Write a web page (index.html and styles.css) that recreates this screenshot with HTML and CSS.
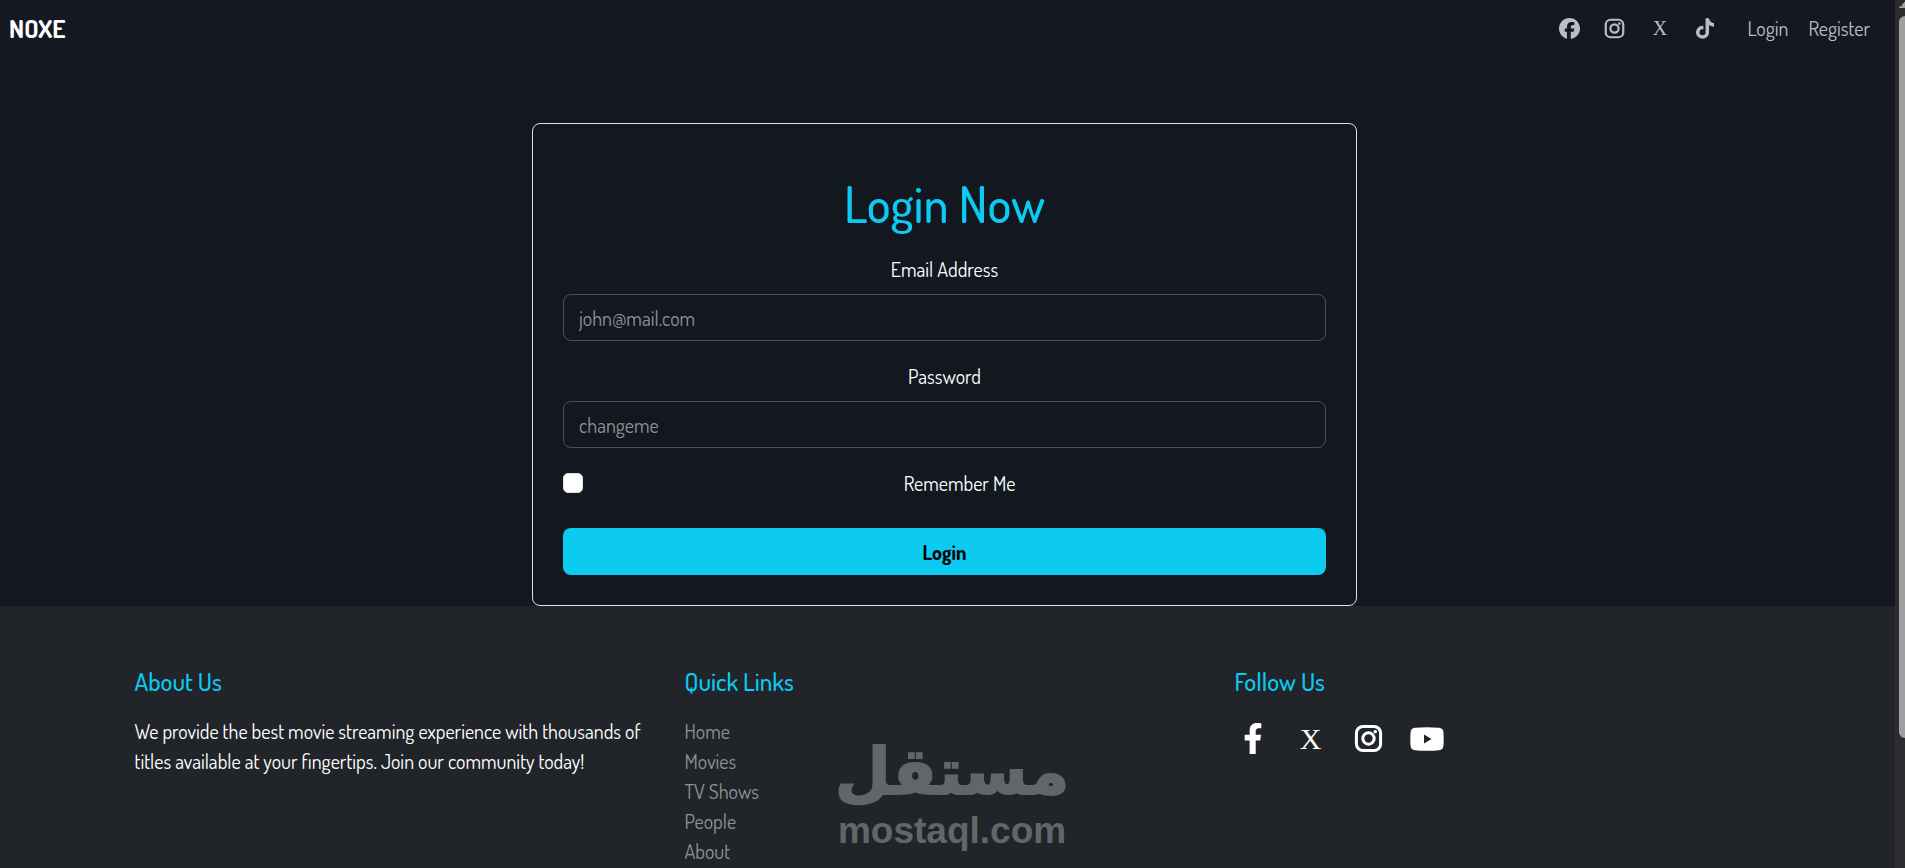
FILE: index.html
```html
<!DOCTYPE html>
<html lang="en">
<head>
  <meta charset="UTF-8">
  <meta name="viewport" content="width=device-width, initial-scale=1.0">
  <title>Noxe</title>
  <link rel="stylesheet" href="styles.css">
</head>
<body>
  <div class="window">
    <div class="page">
      <nav class="navbar">
        <a class="brand" href="#">NOXE</a>
        <ul class="nav-social">
          <li><a href="#" aria-label="Facebook">
            <svg width="21" height="21" viewBox="0 0 512 512"><path d="M512 256C512 114.600 397.400 0 256 0S0 114.600 0 256c0 120 82.700 220.800 194.200 248.500V334.200h-52.800V256h52.800v-33.700c0-87.100 39.400-127.500 125-127.500 16.200 0 44.200 3.200 55.700 6.400v70.800c-6-.6-16.500-1-29.600-1-42 0-58.200 15.900-58.200 57.200V256h83.600l-14.400 78.200H287v175.900C413.800 494.800 512 386.900 512 256z"/></svg>
          </a></li>
          <li><a href="#" aria-label="Instagram">
            <svg width="21" height="21" viewBox="0 0 24 24"><rect class="line" x="2" y="2" width="20" height="20" rx="5.500"/><circle class="line" cx="12" cy="12" r="4.700"/><circle cx="17.600" cy="6.400" r="1.500"/></svg>
          </a></li>
          <li><a class="x-mark" href="#">X</a></li>
          <li><a href="#" aria-label="TikTok">
            <svg width="18" height="21" viewBox="0 0 448 512"><path d="M448 209.900a210.100 210.100 0 0 1-122.800-39.300v178.800A162.600 162.600 0 1 1 185 188.300v89.900a74.600 74.600 0 1 0 52.200 71.200V0h88a121.200 121.200 0 0 0 1.900 22.200 122.200 122.200 0 0 0 53.900 80.200 121.400 121.400 0 0 0 67 20.100z"/></svg>
          </a></li>
        </ul>
        <ul class="nav-links">
          <li><a href="#">Login</a></li>
          <li><a href="#">Register</a></li>
        </ul>
      </nav>

      <main class="main">
        <form class="card">
          <h1>Login Now</h1>
          <label for="email">Email Address</label>
          <input class="field" type="email" id="email" placeholder="john@mail.com">
          <label for="password">Password</label>
          <input class="field" type="password" id="password" placeholder="changeme">
          <div class="remember">
            <input type="checkbox" id="remember">
            <label for="remember">Remember Me</label>
          </div>
          <button class="btn" type="button">Login</button>
        </form>
      </main>

      <footer class="footer">
        <div class="columns">
          <section>
            <h2>About Us</h2>
            <p>We provide the best movie streaming experience with thousands of titles available at your fingertips. Join our community today!</p>
          </section>
          <section>
            <h2>Quick Links</h2>
            <ul class="quick-links">
              <li><a href="#">Home</a></li>
              <li><a href="#">Movies</a></li>
              <li><a href="#">TV Shows</a></li>
              <li><a href="#">People</a></li>
              <li><a href="#">About</a></li>
            </ul>
          </section>
          <section>
            <h2>Follow Us</h2>
            <ul class="follow">
              <li><a href="#" aria-label="Facebook">
                <svg width="20" height="31" viewBox="0 0 320 512"><path d="M279.100 288l14.300-92.700h-89v-60.100c0-25.300 12.400-50.100 52.300-50.100h40.400V6.300S260.400 0 225.400 0C152.200 0 104.300 44.400 104.300 124.700v70.600H23V288h81.300v224h100.100V288z"/></svg>
              </a></li>
              <li><a class="x-mark" href="#">X</a></li>
              <li><a href="#" aria-label="Instagram">
                <svg width="29" height="29" viewBox="0 0 24 24"><rect class="line" x="2" y="2" width="20" height="20" rx="5.500"/><circle class="line" cx="12" cy="12" r="4.700"/><circle cx="17.600" cy="6.400" r="1.500"/></svg>
              </a></li>
              <li><a href="#" aria-label="YouTube">
                <svg width="34" height="24" viewBox="0 0 34 24"><path fill-rule="evenodd" d="M5 .8Q17-.4 29 .8Q33 1.200 33.400 5Q34 12 33.400 19Q33 22.800 29 23.200Q17 24.400 5 23.200Q1 22.800.6 19Q0 12 .6 5Q1 1.200 5 .8ZM14 7.600V16.400L21.600 12Z"/></svg>
              </a></li>
            </ul>
          </section>
        </div>
      </footer>
    </div>

    <div class="scrollbar">
      <span class="scroll-up"></span>
      <span class="scroll-thumb"></span>
    </div>

    <div class="watermark">
      <span class="watermark-ar" lang="ar">مستقل</span>
      <span class="watermark-en">mostaql.com</span>
    </div>
  </div>
</body>
</html>
```
FILE: styles.css
```css
* {
  margin: 0;
  padding: 0;
  box-sizing: border-box;
}

body {
  background-color: #131720;
  color: #fff;
  font-family: Dosis, "Liberation Sans Narrow", "Open Sans", sans-serif;
  font-size: 20px;
  line-height: 30px;
}

a {
  color: inherit;
  text-decoration: none;
}

ul {
  list-style: none;
}

svg {
  display: block;
  fill: currentColor;
}

svg .line {
  fill: none;
  stroke: currentColor;
  stroke-width: 2.500px;
}

.window {
  position: relative;
  display: flex;
  height: 100vh;
  overflow: hidden;
}

.page {
  flex: 1;
  display: flex;
  flex-direction: column;
}

/* navbar */
.navbar {
  display: flex;
  align-items: center;
  min-height: 63px;
  padding: 0 25px 7px 9px;
  background-color: #141821;
  color: #b9bec4;
}

.brand {
  margin-right: auto;
  color: #fff;
  font-size: 25px;
  font-weight: bold;
}

.nav-social {
  display: flex;
  margin-right: 20px;
}

.nav-social li {
  display: flex;
  justify-content: center;
  align-items: center;
  width: 45px;
}

.nav-links {
  display: flex;
  gap: 20px;
}

.x-mark {
  font-family: "Liberation Serif", serif;
}

/* login card */
.main {
  padding: 60px 6px 0 0;
}

.card {
  display: flex;
  flex-direction: column;
  width: 50%;
  max-width: 825px;
  margin: 0 auto;
  padding: 50px 30px 30px;
  border: 1px solid #dee2e6;
  border-radius: 8px;
  text-align: center;
}

.card h1 {
  margin-bottom: 20px;
  color: #0dcaf0;
  font-size: 50px;
  font-weight: 500;
  line-height: 60px;
}

.field {
  height: 47px;
  margin: 10px 0 20px;
  padding: 1px 15px 0;
  border: 1px solid #495057;
  border-radius: 8px;
  background-color: transparent;
  color: #fff;
  font: inherit;
}

.field::placeholder {
  color: #909294;
}

.remember {
  display: flex;
  align-items: center;
  margin-bottom: 30px;
}

.remember input {
  appearance: none;
  width: 20px;
  height: 20px;
  margin-right: 10px;
  border: 1px solid #dee2e6;
  border-radius: 5px;
  background-color: #fff;
}

.remember input:checked {
  background-color: #0dcaf0;
}

.remember label {
  flex: 1;
}

.btn {
  height: 47px;
  border: 0;
  border-radius: 8px;
  background-color: #0dcaf0;
  color: #000;
  font: inherit;
  font-weight: bold;
}

/* footer */
.footer {
  flex: 1;
  padding: 60px 6px 0 0;
  background-color: #212529;
}

.columns {
  display: grid;
  grid-template-columns: repeat(3, 1fr);
  gap: 30px;
  max-width: 1620px;
  margin: 0 auto;
}

.footer h2 {
  margin-bottom: 20px;
  color: #0dcaf0;
  font-size: 25px;
  font-weight: 500;
}

.quick-links {
  color: #909294;
}

.follow {
  display: flex;
  align-items: center;
  margin-top: 27px;
  margin-left: -11px;
}

.follow li {
  display: flex;
  justify-content: center;
  width: 58px;
}

.follow .x-mark {
  font-size: 30px;
}

/* scrollbar */
.scrollbar {
  display: flex;
  flex-direction: column;
  width: 10px;
  padding-left: 4px;
  background-color: #2c2c2c;
}

.scroll-up {
  height: 16px;
  background: linear-gradient(135deg, transparent 50%, #9f9f9f 50%) 0 2px / 6px 6px no-repeat;
}

.scroll-thumb {
  height: 722px;
  border-radius: 6px 0 0 6px;
  background-color: #9f9f9f;
}

.watermark {
  position: absolute;
  left: 835px;
  bottom: 16px;
  display: flex;
  flex-direction: column;
  align-items: center;
  color: #636669;
  font-weight: bold;
}

.watermark-ar {
  font-family: "DejaVu Sans", sans-serif;
  font-size: 64px;
  line-height: 73px;
  -webkit-text-stroke: 2px #636669;
}

.watermark-en {
  font-family: "Liberation Sans", sans-serif;
  font-size: 37px;
  line-height: 43px;
}
```
